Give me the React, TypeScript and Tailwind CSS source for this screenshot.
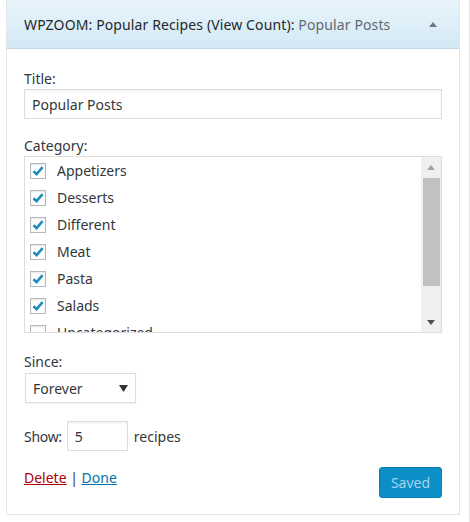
import React from "react";

const categories = [
  { name: "Appetizers", checked: true },
  { name: "Desserts", checked: true },
  { name: "Different", checked: true },
  { name: "Meat", checked: true },
  { name: "Pasta", checked: true },
  { name: "Salads", checked: true },
  { name: "Uncategorized", checked: false },
];

function Checkbox({ checked }: { checked: boolean }) {
  return (
    <span className="w-4 h-4 shrink-0 border border-[#b4b9be] bg-white flex items-center justify-center shadow-[inset_0_1px_2px_rgba(0,0,0,0.1)]">
      {checked && (
        <svg width="14" height="14" viewBox="0 0 14 14">
          <path d="M2.5 7.2 L5.6 10.2 L11.6 3.2" fill="none" stroke="#1e8cbe" strokeWidth="2.6" />
        </svg>
      )}
    </span>
  );
}

export default function App() {
  return (
    <div
      className="w-[470px] h-[522px] bg-white relative text-[14px] text-[#32373c]"
      style={{ fontFamily: '"Noto Sans", "Open Sans", sans-serif' }}
    >
      <div className="flex h-full">
        {/* Widget panel */}
        <div className="ml-[6px] w-[454px] h-[515px] border border-t-0 border-[#e5e5e5] flex flex-col">
          {/* Header */}
          <div className="h-[49px] shrink-0 flex items-center justify-between pl-[17px] pr-[21px] border-b border-[#c3d6e3] bg-gradient-to-b from-[#e8f4fb] to-[#d3e9f5]">
            <h3 className="text-[14px] font-normal text-[#23282d] whitespace-nowrap tracking-[0.12px]">
              WPZOOM: Popular Recipes (View Count):{" "}
              <span className="text-[#5f6a73]">Popular Posts</span>
            </h3>
            <svg width="10" height="7" viewBox="0 0 10 7">
              <path d="M1 6 L5 1 L9 6 Z" fill="#72777c" />
            </svg>
          </div>

          {/* Body */}
          <div className="flex-1 px-[17px] pt-[20px]">
            <label className="block leading-[20px]">Title:</label>
            <div className="h-[30px] border border-[#ddd] shadow-[inset_0_1px_2px_rgba(0,0,0,0.07)] flex items-center px-[7px] text-[#32373c]">
              Popular Posts
            </div>

            <label className="block leading-[20px] mt-[17px]">Category:</label>
            <div className="h-[177px] border border-[#ddd] flex">
              <div className="flex-1 overflow-hidden">
                {categories.map((c) => (
                  <div key={c.name} className="h-[27px] flex items-center pl-[5px] gap-[11px]">
                    <Checkbox checked={c.checked} />
                    <span className="leading-[20px]">{c.name}</span>
                  </div>
                ))}
              </div>
              {/* Scrollbar */}
              <div className="w-[20px] bg-[#f0f0f0] flex flex-col items-center">
                <div className="h-[21px] flex items-center justify-center">
                  <svg width="8" height="5" viewBox="0 0 8 5">
                    <path d="M0 5 L4 0 L8 5 Z" fill="#a3a3a3" />
                  </svg>
                </div>
                <div className="w-[17px] ml-[1px] h-[108px] bg-[#c1c1c1]" />
                <div className="flex-1 flex items-end justify-center pb-[7px]">
                  <svg width="8" height="5" viewBox="0 0 8 5">
                    <path d="M0 0 L8 0 L4 5 Z" fill="#505050" />
                  </svg>
                </div>
              </div>
            </div>

            <label className="block leading-[20px] mt-[19px]">Since:</label>
            <div className="ml-[1px] mt-[1px] w-[111px] h-[30px] border border-[#ddd] shadow-[0_1px_1px_rgba(0,0,0,0.04)] flex items-center justify-between pl-[7px] pr-[7px]">
              <span>Forever</span>
              <svg width="9" height="7" viewBox="0 0 9 7">
                <path d="M0 0 L9 0 L4.5 7 Z" fill="#333" />
              </svg>
            </div>

            <div className="flex items-center mt-[18px] h-[30px]">
              <span className="tracking-[-0.3px]">Show:</span>
              <div className="ml-[5px] w-[61px] h-[30px] border border-[#ddd] shadow-[inset_0_1px_2px_rgba(0,0,0,0.07)] flex items-center px-[7px]">
                5
              </div>
              <span className="ml-[6px]">recipes</span>
            </div>

            <div className="flex items-center justify-between mt-[16px]">
              <div className="leading-[20px] -mt-[10px]">
                <a href="#" className="text-[#a00] underline">Delete</a>
                <span className="text-[#32373c]"> | </span>
                <a href="#" className="text-[#0073aa] underline">Done</a>
              </div>
              <button className="w-[63px] h-[31px] rounded-[3px] bg-[#0a8fc7] border border-[#0a7fb3] text-[#a7d4ec] text-[14px]">
                Saved
              </button>
            </div>
          </div>
        </div>
        <div className="ml-[9px] w-px h-full bg-[#e5e5e5]" />
      </div>
    </div>
  );
}
